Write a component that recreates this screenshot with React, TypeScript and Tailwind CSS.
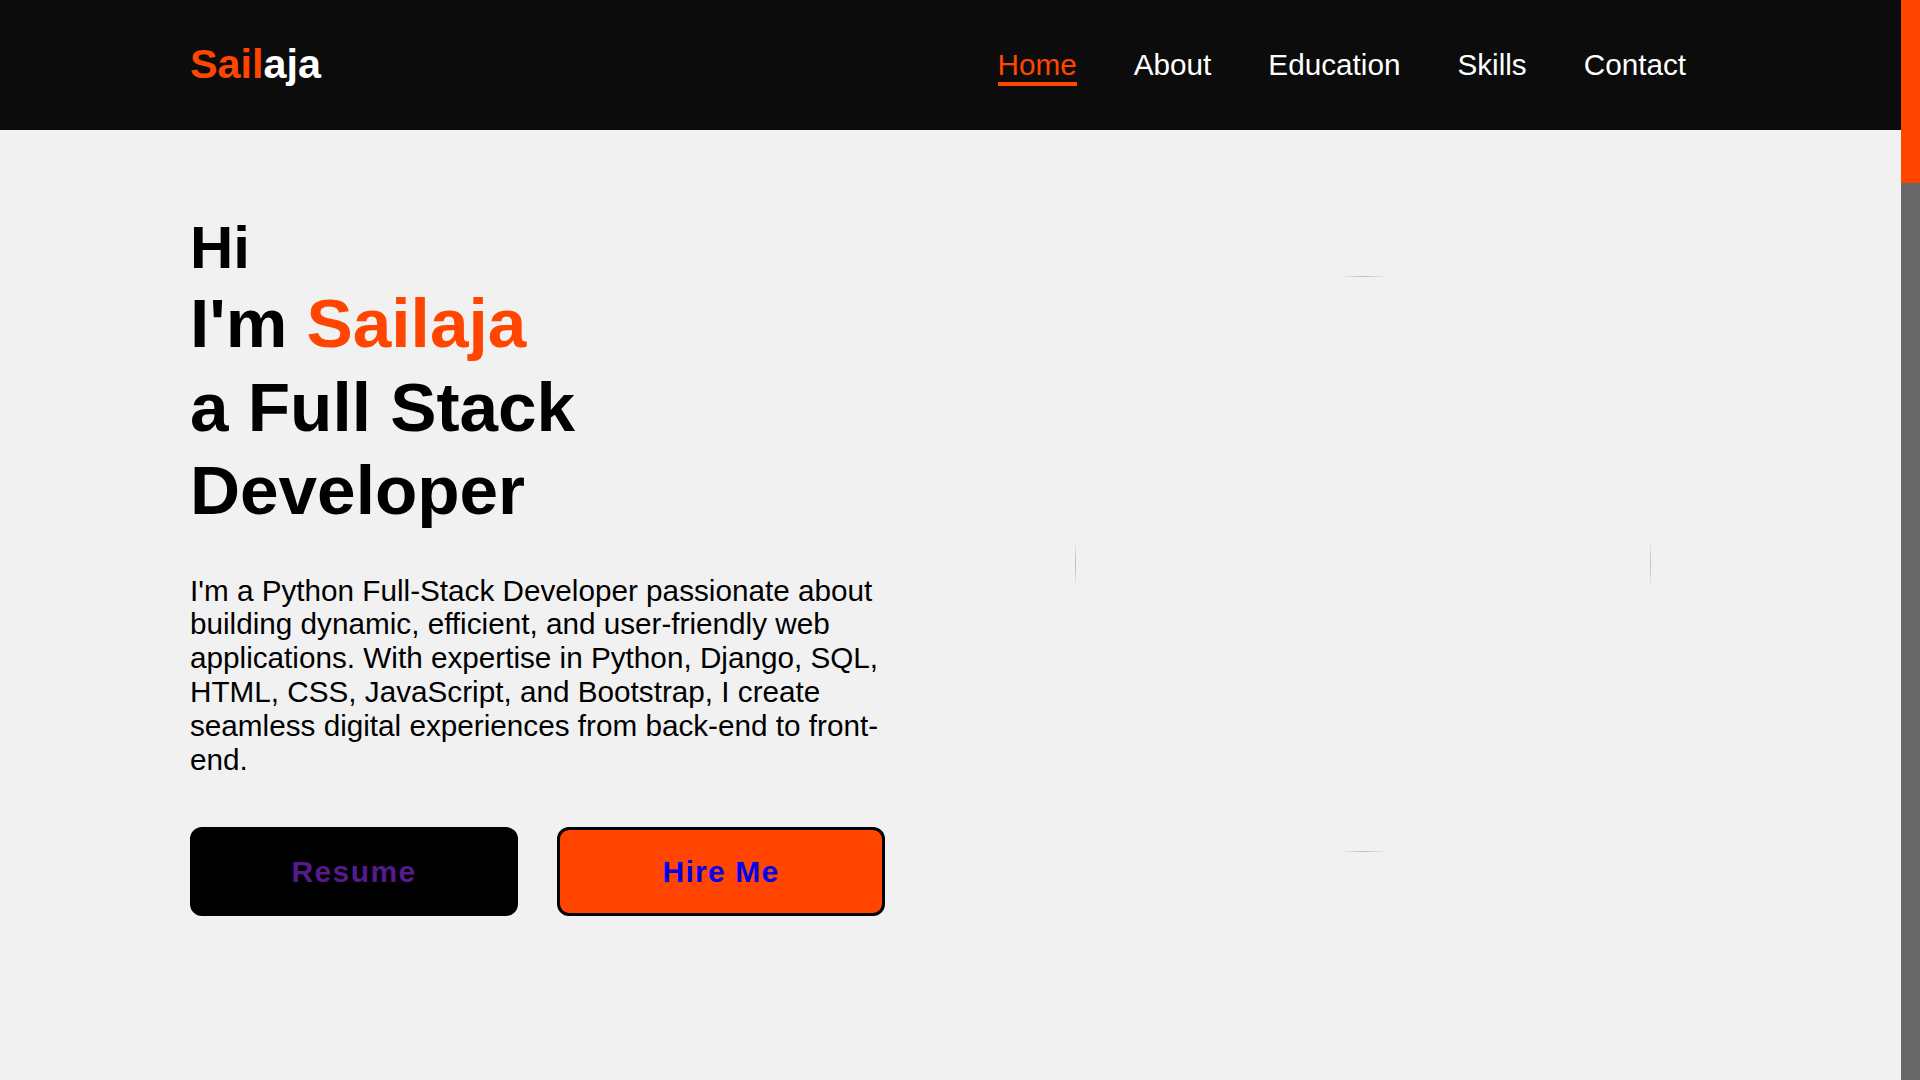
import React from "react";

const links = ["Home", "About", "Education", "Skills", "Contact"];

function Ring() {
    // faint outline of the hero picture frame, only the four extremes show
    return (
        <svg width="576" height="576" viewBox="0 0 576 576" className="shrink-0">
            <defs>
                <linearGradient id="gh" x1="0" y1="0" x2="1" y2="0">
                    <stop offset="0%" stopColor="#f1f1f1" />
                    <stop offset="50%" stopColor="#bcbcbc" />
                    <stop offset="100%" stopColor="#f1f1f1" />
                </linearGradient>
                <linearGradient id="gv" x1="0" y1="0" x2="0" y2="1">
                    <stop offset="0%" stopColor="#f1f1f1" />
                    <stop offset="50%" stopColor="#bcbcbc" />
                    <stop offset="100%" stopColor="#f1f1f1" />
                </linearGradient>
            </defs>
            <rect x="264" y="0" width="48" height="1" fill="url(#gh)" />
            <rect x="264" y="575" width="48" height="1" fill="url(#gh)" />
            <rect x="0" y="264" width="1" height="48" fill="url(#gv)" />
            <rect x="575" y="264" width="1" height="48" fill="url(#gv)" />
        </svg>
    );
}

export default function App() {
    return (
        <div className="flex h-screen bg-[#f1f1f1] font-['Liberation_Sans',Arial,sans-serif] text-black">
            <div className="flex-1 overflow-y-auto">
                <nav className="flex h-[130px] items-center justify-between bg-[#0c0c0c] pl-[190px] pr-[215px]">
                    <a href="#" className="text-[41.3px] font-bold leading-[1.15] text-[#ff4500]">
                        Sail<span className="text-white">aja</span>
                    </a>
                    <ul className="flex gap-[57px]">
                        {links.map((l, i) => (
                            <li key={l}>
                                <a
                                    href="#"
                                    className={
                                        i === 0
                                            ? "block border-b-4 border-[#ff4500] pt-1 text-[29.7px] leading-[1.15] text-[#ff4500]"
                                            : "block border-b-4 border-transparent pt-1 text-[29.7px] leading-[1.15] text-white"
                                    }
                                >
                                    {l}
                                </a>
                            </li>
                        ))}
                    </ul>
                </nav>

                <main className="flex items-center pl-[190px] pt-[83px]">
                    <div className="w-[696px] shrink-0">
                        <h3 className="text-[60px] font-bold leading-[69px]">Hi</h3>
                        <h1 className="text-[69.3px] font-bold leading-[83.5px]">
                            I'm <span className="text-[#ff4500]">Sailaja</span>
                            <br />
                            a Full Stack
                            <br />
                            Developer
                        </h1>
                        <p className="mt-[41px] text-[29.7px] leading-[1.14]">
                            I'm a Python Full-Stack Developer passionate about building dynamic, efficient, and
                            user-friendly web applications. With expertise in Python, Django, SQL, HTML, CSS,
                            JavaScript, and Bootstrap, I create seamless digital experiences from back-end to
                            front-end.
                        </p>
                        <div className="mt-[50px] flex gap-[39px]">
                            <a
                                href="#"
                                className="flex h-[89px] w-[328px] items-center justify-center rounded-[12px] border-[3px] border-black bg-black text-[30px] font-bold tracking-[1.4px] text-[#551a8b]"
                            >
                                Resume
                            </a>
                            <a
                                href="#"
                                className="flex h-[89px] w-[328px] items-center justify-center rounded-[12px] border-[3px] border-black bg-[#ff4500] text-[30px] font-bold tracking-[1.2px] text-[#0000ee]"
                            >
                                Hire Me
                            </a>
                        </div>
                    </div>
                    <div className="ml-[189px]">
                        <Ring />
                    </div>
                </main>
            </div>

            {/* page scrollbar */}
            <aside className="w-[19px] shrink-0 bg-[#686868]">
                <div className="h-[183px] bg-[#ff4500]" />
            </aside>
        </div>
    );
}
